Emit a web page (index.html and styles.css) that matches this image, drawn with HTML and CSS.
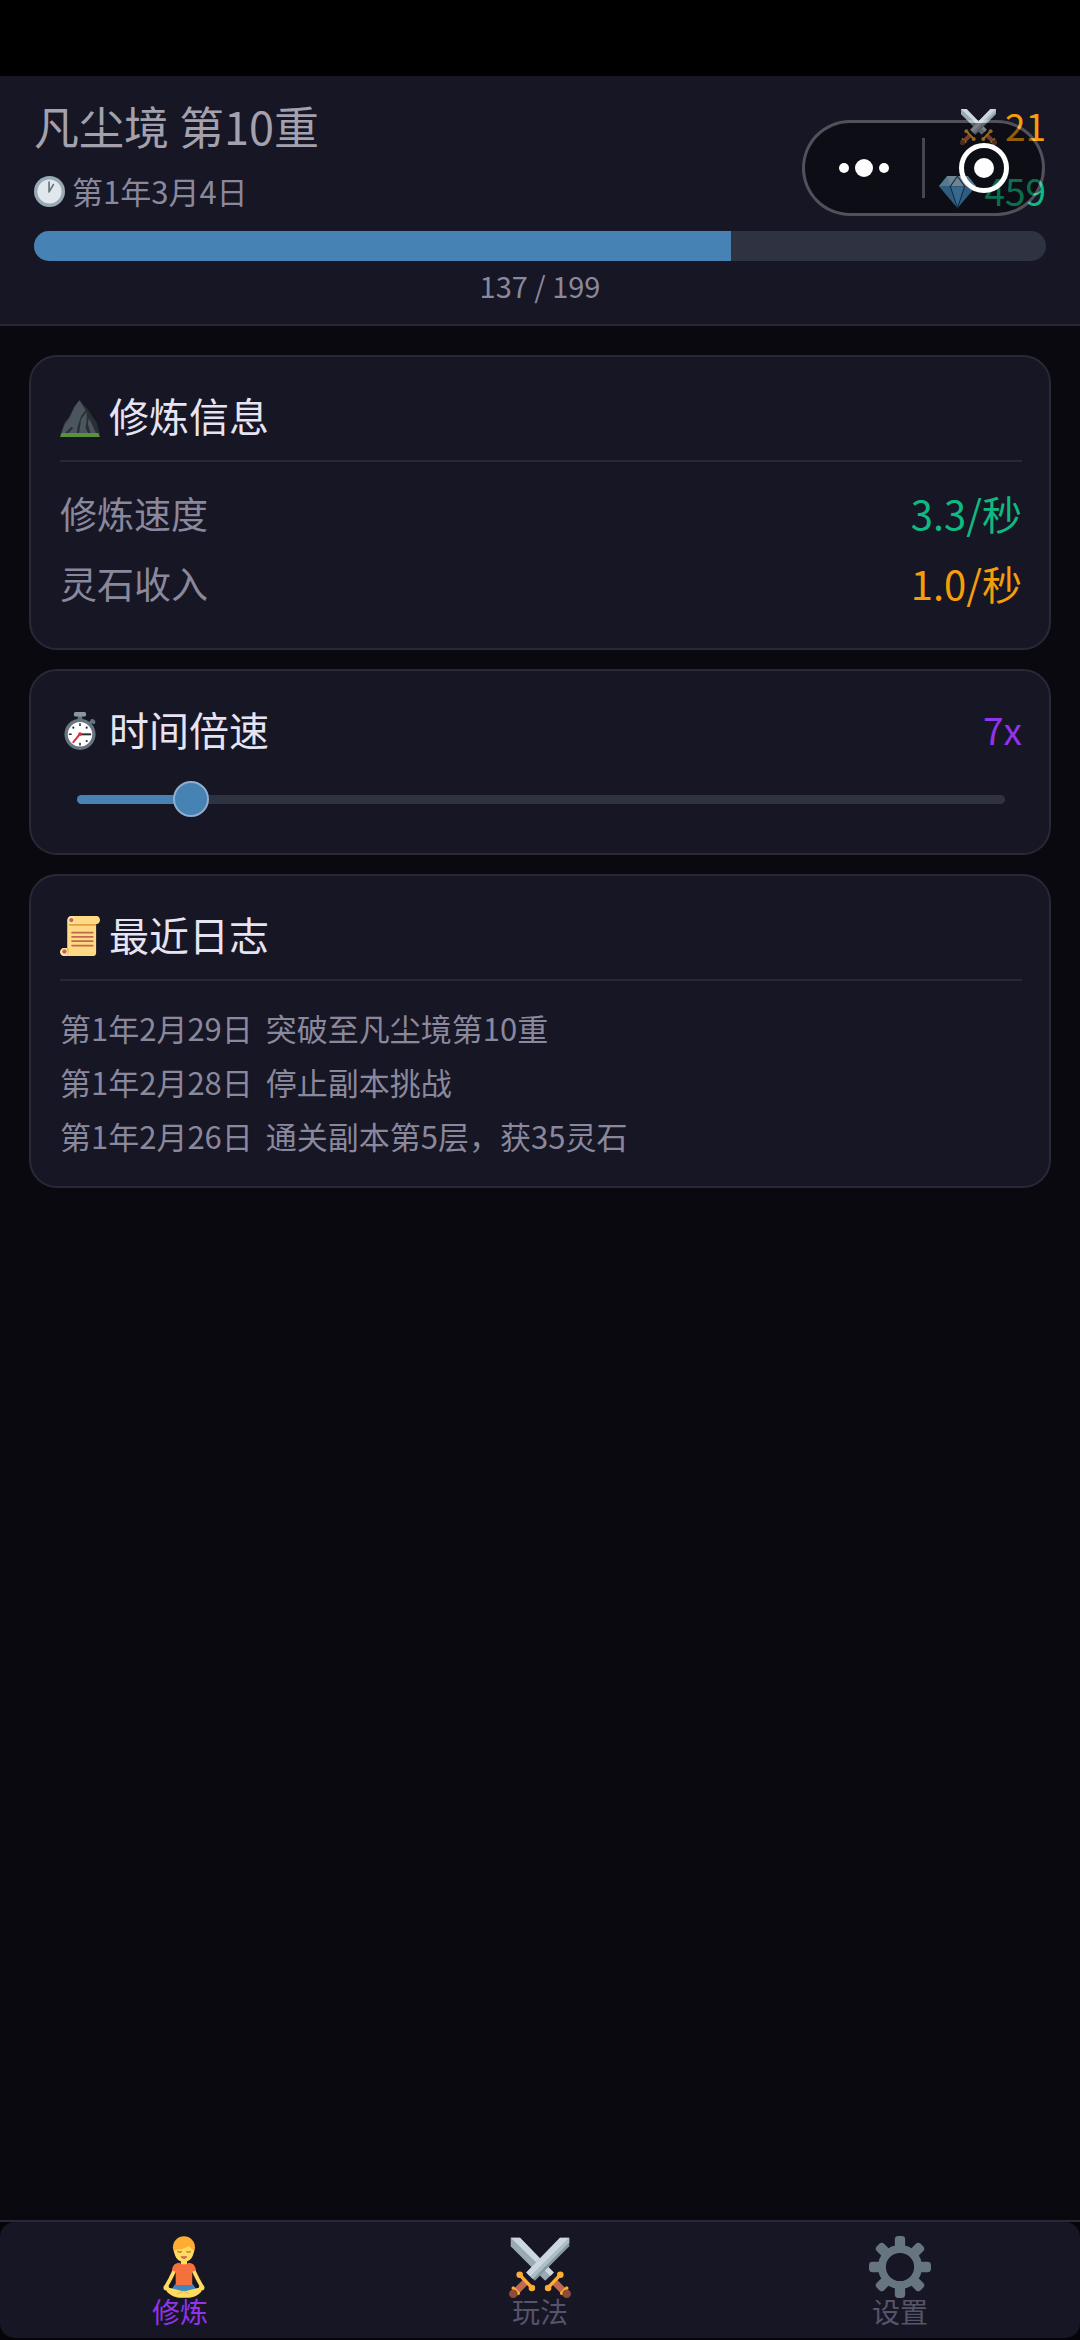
FILE: index.html
```html
<!DOCTYPE html>
<html lang="zh-CN">
  <head>
    <meta charset="UTF-8">
    <meta name="viewport" content="width=device-width, initial-scale=1">
    <title>凡尘境</title>
    <link rel="stylesheet" href="styles.css">
  </head>
  <body>
    <!-- shared icons -->
    <svg class="sprite" aria-hidden="true">
      <symbol id="icon-swords" viewBox="0 0 36 36">
        <path fill="#99aab5" d="M1 1h5.400L26 21.200l-5 4.800L1 6z"/>
        <path fill="#ccd6dd" d="M1 1h5.400L26 21.200l-2 2z"/>
        <path stroke="#bf6952" stroke-width="4" d="M26.500 26.800l6.500 6.500"/>
        <path stroke="#ffac33" stroke-width="2" stroke-linecap="round" d="M22.700 30l7.200-7.600M30.600 33.200l2.900-2.900"/>
        <circle fill="#ffac33" cx="22.700" cy="30.200" r="1.900"/>
        <circle fill="#ffac33" cx="29.800" cy="22.500" r="1.900"/>
        <circle fill="#8a4b38" cx="33.500" cy="33.500" r="2.500"/>
        <path fill="#8899a6" d="M35 1h-5.400L10 21.200l5 4.800L35 6z"/>
        <path fill="#ccd6dd" d="M35 1h-5.400L10 21.200l2.400 2.400z"/>
        <path fill="#aebdc6" d="M35 1L12.400 23.600l1.400 1.300L35 3.600z"/>
        <path stroke="#bf6952" stroke-width="4" d="M9.500 26.800L3 33.300"/>
        <path stroke="#ffac33" stroke-width="2" stroke-linecap="round" d="M13.300 30L6.100 22.400M5.400 33.200l-2.900-2.900"/>
        <circle fill="#ffac33" cx="13.300" cy="30.200" r="1.900"/>
        <circle fill="#ffac33" cx="6.200" cy="22.500" r="1.900"/>
        <circle fill="#8a4b38" cx="2.500" cy="33.500" r="2.500"/>
      </symbol>
    </svg>

    <div class="status-bar"></div>

    <header class="header">
      <div class="header-row realm-row">
        <h1 class="realm">凡尘境 第10重</h1>
        <span class="stat power">
          <svg class="icon" aria-hidden="true"><use href="#icon-swords"/></svg>
          <span>21</span>
        </span>
      </div>
      <div class="header-row date-row">
        <span class="date">
          <svg class="icon" viewBox="0 0 36 36" aria-hidden="true">
            <circle fill="#99aab5" cx="18" cy="18" r="18"/>
            <circle fill="#e1e8ed" cx="18" cy="18" r="14"/>
            <path fill="none" stroke="#66757f" stroke-width="2" stroke-linecap="round" stroke-linejoin="round" d="M17.500 7v11.500L22.500 10"/>
          </svg>
          <span>第1年3月4日</span>
        </span>
        <span class="stat stones">
          <svg class="icon" viewBox="0 0 36 36" aria-hidden="true">
            <path fill="#bdddf4" d="M8 3h20l8 10H0z"/>
            <path fill="#8ccaf7" d="M8 3l3 10H0zM28 3l-3 10h11z"/>
            <path fill="#5dadec" d="M0 13h36L18 34z"/>
            <path fill="#4289c1" d="M25 13h11L18 34zM0 13h11l7 21z" opacity=".5"/>
            <path fill="none" stroke="#1e4a6e" stroke-width="1" d="M18 3l-7 10 7 21 7-21z"/>
          </svg>
          <span>459</span>
        </span>
      </div>
      <div class="progress">
        <div class="progress-fill" style="width: 68.84%"></div>
      </div>
      <p class="progress-text">137 / 199</p>

      <div class="capsule">
        <button type="button" class="capsule-btn" aria-label="更多">
          <svg width="54" height="20" viewBox="0 0 54 20" fill="#fff">
            <circle cx="7" cy="10" r="5"/>
            <circle cx="27" cy="10" r="9"/>
            <circle cx="47" cy="10" r="5"/>
          </svg>
        </button>
        <span class="capsule-line"></span>
        <button type="button" class="capsule-btn" aria-label="关闭">
          <svg width="50" height="50" viewBox="0 0 50 50">
            <circle cx="25" cy="25" r="22.500" fill="none" stroke="#fff" stroke-width="5"/>
            <circle cx="25" cy="25" r="10" fill="#fff"/>
          </svg>
        </button>
      </div>
    </header>

    <main class="content">
      <section class="card">
        <h2 class="card-title divided">
          <svg class="icon" viewBox="0 0 36 36" aria-hidden="true">
            <path fill="#292f33" d="M17.500 3L25 11l4 6 4 6 3 11H0l4-11 4-5 5-10z"/>
            <path fill="#4b555d" d="M17.500 3L13 9 9 18l-5 7-3 9h14l1-8 3-9 4-5z"/>
            <path fill="#4b555d" d="M24 13l-5 7-2 14h9l-3-6 1-7zM26 19l-1 5 3 10h5l-4-9z"/>
            <path fill="#292f33" d="M10 27l2 1-5 5H4z"/>
            <path fill="#5c913b" d="M1.500 32.500h33L36 36H0z"/>
          </svg>
          <span>修炼信息</span>
        </h2>
        <dl class="info">
          <div class="info-row">
            <dt>修炼速度</dt>
            <dd class="green">3.3/秒</dd>
          </div>
          <div class="info-row">
            <dt>灵石收入</dt>
            <dd class="orange">1.0/秒</dd>
          </div>
        </dl>
      </section>

      <section class="card speed-card">
        <div class="card-head">
          <h2 class="card-title">
            <svg class="icon" viewBox="0 0 36 36" aria-hidden="true">
              <path fill="#66757f" d="M16 4h4v5h-4z"/>
              <rect fill="#8899a6" x="12.500" y="1" width="11" height="4" rx="1.500"/>
              <path stroke="#66757f" stroke-width="2" d="M26 12l4-4"/>
              <ellipse fill="#66757f" cx="29.500" cy="9.500" rx="2.600" ry="1.900" transform="rotate(35 29.500 9.500)"/>
              <circle fill="#66757f" cx="18" cy="21" r="14"/>
              <circle fill="#fff" cx="18" cy="21" r="11"/>
              <path stroke="#292f33" stroke-width="1.400" d="M18 11v2.500M18 28.500V31M8 21h2.500"/>
              <g fill="#292f33">
                <circle cx="12" cy="15" r="1"/>
                <circle cx="24" cy="15" r="1"/>
                <circle cx="24" cy="27" r="1"/>
              </g>
              <path stroke="#292f33" stroke-width="1.800" d="M18 21h10"/>
              <path stroke="#dd2e44" stroke-width="1.800" stroke-linecap="round" d="M18 20.500L12 28"/>
              <circle fill="#dd2e44" cx="18" cy="20.800" r="1.600"/>
            </svg>
            <label for="speed">时间倍速</label>
          </h2>
          <output class="speed-value" id="speed-value" for="speed">7x</output>
        </div>
        <div class="slider">
          <div class="slider-track">
            <div class="slider-fill" id="speed-fill" style="width: 12.24%"></div>
          </div>
          <input type="range" id="speed" min="1" max="50" value="7">
        </div>
      </section>

      <section class="card log-card">
        <h2 class="card-title divided">
          <svg class="icon" viewBox="0 0 36 36" aria-hidden="true">
            <path fill="#ffd983" d="M6.500 4c0-2.200 1.500-4 3.700-4H33c1.700 0 3 1.600 3 3.600s-1.300 3.600-3 3.600h-.500V33c0 1.700-1 3-2.500 3H3.500C1.600 36 0 34.300 0 32.400s1.600-3.700 3.500-3.700h3z"/>
            <path fill="#e39f3d" d="M8 7.200h24.500v1.500H8.500zM6.500 28.700c1.200.8 1.500 2.500 1 4.300l-1 2.600-.6-3z"/>
            <circle fill="#ffe8b6" cx="10.200" cy="3.700" r="3.200"/>
            <circle fill="#c1694f" cx="10.200" cy="3.700" r="2"/>
            <circle fill="#ffe8b6" cx="3.800" cy="32.300" r="3.200"/>
            <circle fill="#c1694f" cx="4" cy="32" r="2"/>
            <path stroke="#c1694f" stroke-width="1.500" stroke-linecap="round" d="M10.800 15h18.700M10.800 18.800h18.700M10.800 22.600h18.700M10.800 26.600h18.700"/>
          </svg>
          <span>最近日志</span>
        </h2>
        <ul class="log">
          <li><time>第1年2月29日</time><span>突破至凡尘境第10重</span></li>
          <li><time>第1年2月28日</time><span>停止副本挑战</span></li>
          <li><time>第1年2月26日</time><span>通关副本第5层，获35灵石</span></li>
        </ul>
      </section>
    </main>

    <nav class="tabbar">
      <div class="tabs">
        <a class="tab active" href="#practice">
          <svg class="tab-icon" viewBox="0 0 36 36" aria-hidden="true">
            <g transform="translate(1.300 0)">
              <path fill="#ffdc5d" d="M17.200 12h3.600v5h-3.600z"/>
              <path fill="none" stroke="#ffdc5d" stroke-width="2.200" stroke-linecap="round" stroke-linejoin="round" d="M13.500 20L11 25l-2.500 4.500M24.500 20l2.500 5 2.500 4.500"/>
              <path fill="#3b88c3" d="M13.800 28h10.400l2 3-3 3h-8.400l-3-3z"/>
              <path fill="#f4703d" d="M16.200 15.600c1.800 1.200 3.800 1.200 5.600 0 2.400.2 3.900 1.600 4.200 4.400l-2.200.8v7.700h-9.600v-7.700L12 20c.3-2.800 1.800-4.200 4.200-4.400z"/>
              <path fill="#ffdc5d" d="M10.500 30l8.500 2.200 8.500-2.200c2 .2 2.300 1.800 1 2.900-1.700 1.700-4.700 3-7.700 3h-3.600c-2.500 0-5.700-1.300-7.500-3-1.300-1.100-1.200-2.700.8-2.900z"/>
              <path fill="none" stroke="#f0b84a" stroke-width=".7" d="M15 33.500l4-1.500 3 1.500"/>
              <circle fill="#ffdc5d" cx="8.700" cy="30" r="1.600"/>
              <circle fill="#ffdc5d" cx="29.300" cy="30" r="1.600"/>
              <ellipse fill="#ffac33" cx="19" cy="6.600" rx="6.400" ry="6.500"/>
              <path fill="#ffdc5d" d="M13.400 8c4 0 6.500-1 8.500-2.200 1 1.400 1.900 1.800 2.700 2.200.3 4.300-2.200 7-5.600 7s-5.800-2.700-5.600-7z"/>
              <path fill="none" stroke="#c1694f" stroke-width=".7" stroke-linecap="round" d="M15.500 9q1 .8 2 0M20.700 9q1 .8 2 0"/>
              <path fill="#c1694f" d="M17 11.800h4q-.5 1.500-2 1.500t-2-1.500z"/>
            </g>
          </svg>
          <span>修炼</span>
        </a>
        <a class="tab" href="#play">
          <svg class="tab-icon" aria-hidden="true"><use href="#icon-swords"/></svg>
          <span>玩法</span>
        </a>
        <a class="tab" href="#settings">
          <svg class="tab-icon" viewBox="0 0 36 36" aria-hidden="true">
            <g fill="#66757f">
              <rect id="tooth" x="15" y="0" width="6" height="8" rx="2"/>
              <use href="#tooth" transform="rotate(45 18 18)"/>
              <use href="#tooth" transform="rotate(90 18 18)"/>
              <use href="#tooth" transform="rotate(135 18 18)"/>
              <use href="#tooth" transform="rotate(180 18 18)"/>
              <use href="#tooth" transform="rotate(225 18 18)"/>
              <use href="#tooth" transform="rotate(270 18 18)"/>
              <use href="#tooth" transform="rotate(315 18 18)"/>
            </g>
            <circle cx="18" cy="18" r="10.500" fill="none" stroke="#66757f" stroke-width="4.600"/>
          </svg>
          <span>设置</span>
        </a>
      </div>
    </nav>

    <script>
      const speed = document.getElementById('speed');
      const speedFill = document.getElementById('speed-fill');
      const speedValue = document.getElementById('speed-value');

      speed.addEventListener('input', () => {
        speedFill.style.width = (speed.value - 1) / 49 * 100 + '%';
        speedValue.textContent = speed.value + 'x';
      });
    </script>
  </body>
</html>
```

FILE: styles.css
```css
* {
  box-sizing: border-box;
  margin: 0;
  padding: 0;
}

body {
  display: flex;
  flex-direction: column;
  min-height: 100vh;
  background: #09090f;
  color: #8a889d;
  font-family: "Noto Sans CJK SC", "Noto Sans", sans-serif;
}

.sprite {
  position: absolute;
  width: 0;
  height: 0;
}

.icon {
  flex: none;
  width: 1em;
  height: 1em;
  margin-top: 3px;
}

/* header */
.status-bar {
  height: 76px;
  background: #000;
}

.header {
  position: relative;
  padding: 16px 34px 14px;
  background: #171624;
  border-bottom: 2px solid #292836;
}

.header-row {
  display: flex;
  justify-content: space-between;
  align-items: center;
}

.realm-row {
  height: 66px;
}

.date-row {
  height: 64px;
}

.realm {
  color: #a3a1ae;
  font-size: 45px;
  font-weight: 400;
}

.date {
  display: flex;
  align-items: center;
  gap: 7px;
  font-size: 31px;
}

.stat {
  display: flex;
  align-items: center;
  gap: 8px;
  font-size: 37px;
}

.power {
  color: #f59e0b;
}

.stones {
  color: #10b981;
}

.progress {
  height: 30px;
  margin-top: 9px;
  background: #2f3341;
  border-radius: 15px;
  overflow: hidden;
}

.progress-fill {
  height: 100%;
  background: #4682b4;
}

.progress-text {
  font-size: 29px;
  line-height: 49px;
  text-align: center;
}

/* floating menu over the header */
.capsule {
  position: absolute;
  top: 44px;
  right: 35px;
  display: flex;
  align-items: center;
  width: 243px;
  height: 96px;
  background: rgba(0, 0, 0, 0.4);
  border: 3px solid rgba(255, 255, 255, 0.25);
  border-radius: 48px;
  background-clip: padding-box;
}

.capsule-btn {
  display: flex;
  flex: 1;
  align-items: center;
  justify-content: center;
  height: 100%;
  background: none;
  border: none;
  cursor: pointer;
}

.capsule-line {
  width: 3px;
  height: 60px;
  background: #454450;
}

/* cards */
.content {
  display: flex;
  flex: 1;
  flex-direction: column;
  gap: 19px;
  padding: 29px;
}

.card {
  padding: 28px 27px 30px 29px;
  background: #171624;
  border: 2px solid #292836;
  border-radius: 28px;
}

.card-title {
  display: flex;
  align-items: center;
  gap: 9px;
  color: #e6e4f2;
  font-size: 40px;
  font-weight: 400;
  line-height: 60px;
}

.divided {
  margin-bottom: 16px;
  padding-bottom: 15px;
  border-bottom: 2px solid #292836;
}

.info-row {
  display: flex;
  justify-content: space-between;
  align-items: center;
  line-height: 70px;
}

.info-row dt {
  font-size: 37px;
}

.info-row dd {
  font-size: 40px;
}

.green {
  color: #10b981;
}

.orange {
  color: #f59e0b;
}

.card-head {
  display: flex;
  justify-content: space-between;
  align-items: center;
  margin-bottom: 22px;
}

.speed-card {
  padding-bottom: 36px;
}

.speed-value {
  color: #9333ea;
  font-size: 37px;
}

.slider {
  display: grid;
  align-items: center;
}

.slider-track,
.slider input {
  grid-area: 1 / 1;
}

.slider-track {
  height: 9px;
  margin: 0 17px;
  background: #2f3341;
  border-radius: 5px;
  overflow: hidden;
}

.slider-fill {
  height: 100%;
  background: #4682b4;
}

.slider input {
  width: 100%;
  height: 36px;
  background: none;
  appearance: none;
  cursor: pointer;
}

.slider input::-webkit-slider-thumb {
  appearance: none;
  width: 36px;
  height: 36px;
  background: #4682b4;
  border: 2px solid #91add0;
  border-radius: 50%;
}

.log-card {
  padding-bottom: 23px;
}

.log {
  padding-top: 4px;
  list-style: none;
}

.log li {
  display: flex;
  gap: 13px;
  font-size: 31px;
  line-height: 54px;
}

/* bottom tabs */
.tabbar {
  padding-bottom: 2px;
  background: #050509;
  border-top: 2px solid #292836;
}

.tabs {
  display: flex;
  background: #171624;
  border-radius: 15px;
}

.tab {
  display: flex;
  flex: 1;
  flex-direction: column;
  align-items: center;
  padding: 14px 0;
  color: #56546a;
  font-size: 28px;
  line-height: 26px;
  text-decoration: none;
}

.tab-icon {
  width: 62px;
  height: 62px;
}

.active {
  color: #9333ea;
}
```
